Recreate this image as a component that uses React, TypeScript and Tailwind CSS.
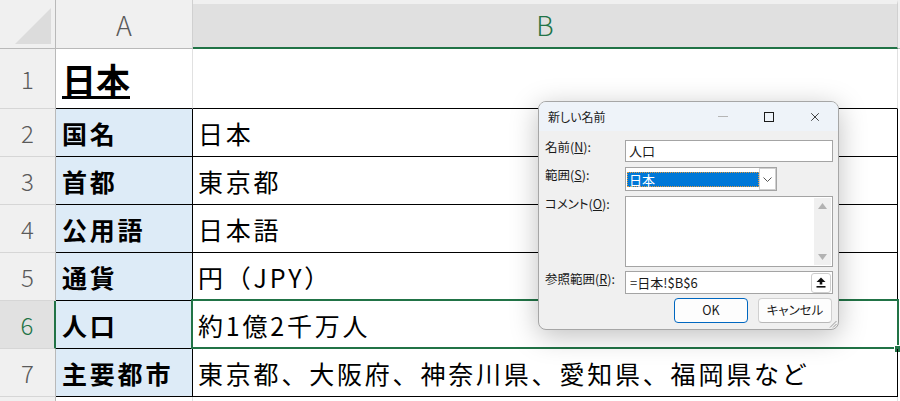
import { X } from "lucide-react";

const rows = [
  { n: 2, a: "国名", b: "日本" },
  { n: 3, a: "首都", b: "東京都" },
  { n: 4, a: "公用語", b: "日本語" },
  { n: 5, a: "通貨", b: "円（JPY）" },
  { n: 6, a: "人口", b: "約1億2千万人", sel: true },
  { n: 7, a: "主要都市", b: "東京都、大阪府、神奈川県、愛知県、福岡県など" },
];

function NameDialog() {
  return (
    <div className="absolute left-[538px] top-[101px] w-[301px] h-[229px] rounded-lg border border-[#a6a6a6] bg-[#f0f0f0] shadow-[0_6px_28px_rgba(0,0,0,0.25)] overflow-hidden text-[#1a1a1a] [font-feature-settings:'palt']">
      {/* Title bar */}
      <div className="h-[29px] bg-[#eef3f9] flex items-center">
        <span className="pl-[9px] text-[12px]">新しい名前</span>
        <div className="ml-auto flex h-full">
          <div className="w-[46px] flex items-center justify-center">
            <div className="w-[10px] h-px bg-[#b5b5b5]" />
          </div>
          <div className="w-[46px] flex items-center justify-center">
            <div className="w-[10px] h-[10px] border border-[#1a1a1a]" />
          </div>
          <div className="w-[46px] flex items-center justify-center">
            <X className="w-[14px] h-[14px]" strokeWidth={1.4} />
          </div>
        </div>
      </div>

      {/* Body */}
      <div className="pl-[6px] pr-[5px] pt-[9px] text-[12.5px]">
        <div className="flex items-start h-[22px]">
          <span className="w-[80px] -mt-[1px] leading-4">
            名前(<u>N</u>):
          </span>
          <div className="flex-1 h-full border border-[#a4a4a4] bg-white flex items-center pl-[3px] text-[13px]">
            人口
          </div>
        </div>

        <div className="flex items-start h-[24px] mt-[5px]">
          <span className="w-[80px] leading-4">
            範囲(<u>S</u>):
          </span>
          <div className="w-[152px] h-full border border-[#a4a4a4] bg-white flex items-center">
            <div className="ml-px flex-1 h-[15px] bg-[#0078d7] border border-dotted border-[#e39a3c] text-white text-[13px] leading-[13px] pl-px">
              日本
            </div>
            <div className="w-[17px] h-[22px] border border-[#cfcfcf] bg-white flex items-center justify-center">
              <svg width="9" height="5" viewBox="0 0 9 5" fill="none">
                <path d="M0.5 0.5 L4.5 4.5 L8.5 0.5" stroke="#555" strokeWidth="1" />
              </svg>
            </div>
          </div>
        </div>

        <div className="flex items-start h-[71px] mt-[5px]">
          <span className="w-[80px] leading-4">
            コメント(<u>O</u>):
          </span>
          <div className="flex-1 h-full border border-[#a4a4a4] bg-white flex justify-end py-px pr-px">
            <div className="w-[17px] h-full bg-[#f0f0f0] flex flex-col items-center justify-between py-[5px]">
              <svg width="9" height="6" viewBox="0 0 9 6">
                <path d="M0 6 L4.5 0 L9 6 Z" fill="#b2b2b2" />
              </svg>
              <svg width="9" height="6" viewBox="0 0 9 6">
                <path d="M0 0 L4.5 6 L9 0 Z" fill="#b2b2b2" />
              </svg>
            </div>
          </div>
        </div>

        <div className="flex items-start h-[23px] mt-[4px]">
          <span className="w-[80px] leading-4">
            参照範囲(<u>R</u>):
          </span>
          <div className="flex-1 h-full border border-[#a4a4a4] bg-white flex items-center pl-[4px] pr-px text-[13px]">
            <span>=日本!$B$6</span>
            <div className="ml-auto w-[20px] h-[20px] rounded-[3px] border border-[#cdcdcd] bg-white flex items-center justify-center">
              <svg width="10" height="11" viewBox="0 0 10 11">
                <path d="M5 0.5 L9.5 5 L6.3 5 L6.3 7.5 L3.7 7.5 L3.7 5 L0.5 5 Z" fill="#111" />
                <rect x="0.5" y="9" width="9" height="1.6" fill="#111" />
              </svg>
            </div>
          </div>
        </div>

        <div className="flex justify-end gap-[10px] mt-[4px] pr-px text-[12.5px]">
          <div className="w-[74px] h-[25px] rounded-[4px] border border-[#0067c0] bg-[#fdfdfd] flex items-center justify-center">
            OK
          </div>
          <div className="w-[74px] h-[25px] rounded-[4px] border border-[#d0d0d0] border-b-[#b8b8b8] bg-[#fdfdfd] flex items-center justify-center">
            キャンセル
          </div>
        </div>
      </div>

      {/* resize grip */}
      <svg className="absolute right-[1px] bottom-[1px]" width="8" height="8" viewBox="0 0 8 8">
        <path d="M7.5 1 L1 7.5 M7.5 4 L4 7.5 M7.5 6.5 L6.5 7.5" stroke="#9a9a9a" strokeWidth="1" />
      </svg>
    </div>
  );
}

export default function App() {
  return (
    <div className="relative w-[900px] h-[401px] overflow-hidden bg-white font-['Noto_Sans_CJK_JP','Noto_Sans',sans-serif] text-black">
      {/* Column headers */}
      <div className="flex h-[49px] bg-[#f0f0f0]">
        <div className="w-[56px] h-full border-r border-b border-[#b9b9b9]">
          <svg width="55" height="48" viewBox="0 0 55 48">
            <path d="M15 44 L51 44 L51 8 Z" fill="#dcdcdc" />
          </svg>
        </div>
        <div className="w-[137px] h-full border-r border-r-[#d0d0d0] border-b border-b-[#b9b9b9] flex items-center justify-center pt-[2px] text-[27px] font-light text-[#5a5a5a]">
          A
        </div>
        <div className="w-[705px] h-full border-t-4 border-t-[#f0f0f0] bg-[#e0e0e0] border-b-2 border-b-[#217346] border-r border-r-[#d0d0d0] flex items-center justify-center text-[27px] font-light text-[#217346]">
          B
        </div>
        <div className="flex-1 border-b border-[#b9b9b9]" />
      </div>

      {/* Row 1 */}
      <div className="flex h-[60px]">
        <div className="w-[56px] h-full bg-[#f0f0f0] border-r border-r-[#b9b9b9] border-b border-b-[#d6d6d6] flex items-center justify-center text-[24px] font-light text-[#5a5a5a]">
          1
        </div>
        <div className="w-[137px] h-full border-r border-r-[#e1e1e1] border-b border-b-black flex items-center pl-[6px]">
          <span className="text-[34px] font-bold leading-none underline decoration-[3px] underline-offset-[3px]">
            日本
          </span>
        </div>
        <div className="w-[705px] h-full border-r border-r-[#e1e1e1] border-b border-b-black" />
        <div className="flex-1" />
      </div>

      {/* Rows 2-7 */}
      {rows.map((r) => (
        <div key={r.n} className="flex h-[48px]">
          <div
            className={`w-[56px] h-full border-r border-b border-b-[#d6d6d6] flex items-center justify-center text-[24px] font-light ${
              r.sel
                ? "bg-[#e1e1e1] border-r-2 border-r-[#217346] text-[#217346]"
                : "bg-[#f0f0f0] border-r-[#b9b9b9] text-[#5a5a5a]"
            }`}
          >
            {r.n}
          </div>
          <div className="w-[137px] h-full bg-[#ddebf7] border-r border-b border-black flex items-center pl-[6px] pt-[2px] text-[25px] font-bold tracking-[2.8px] whitespace-nowrap">
            {r.a}
          </div>
          <div className="relative w-[705px] h-full border-r border-b border-black flex items-center pl-[5px] pt-[2px] text-[25px] tracking-[2.8px] whitespace-nowrap">
            {r.b}
            {r.sel && (
              <>
                <div className="absolute -left-[2px] -top-[2px] -right-[2px] -bottom-[1px] border-2 border-[#217346]" />
                <div className="absolute -right-[4px] -bottom-[4px] w-[6px] h-[6px] bg-[#217346] outline outline-1 outline-white" />
              </>
            )}
          </div>
          <div className="flex-1" />
        </div>
      ))}

      {/* Row 8 (partial) */}
      <div className="flex h-[10px]">
        <div className="w-[56px] h-full bg-[#f0f0f0] border-r border-[#b9b9b9]" />
        <div className="w-[137px] h-full border-r border-[#e1e1e1]" />
        <div className="w-[705px] h-full border-r border-[#e1e1e1]" />
      </div>

      <NameDialog />
    </div>
  );
}
